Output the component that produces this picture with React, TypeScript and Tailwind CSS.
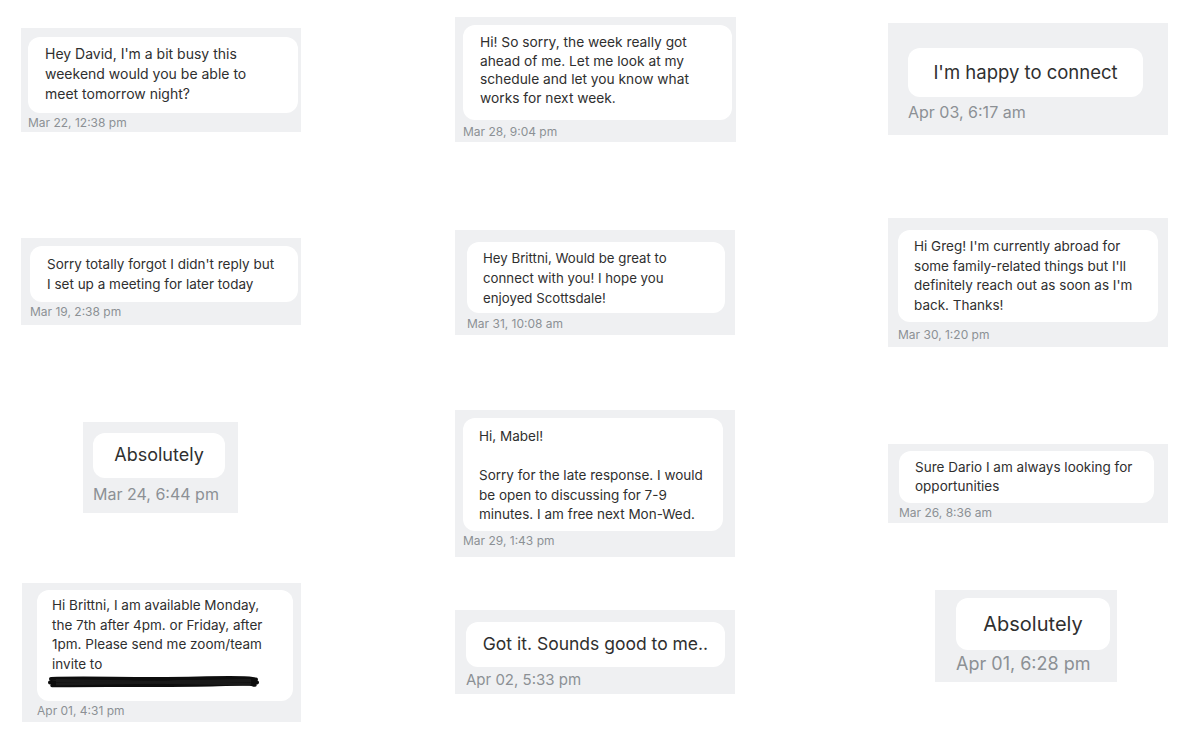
import React from "react";

type CardProps = {
  outer: string;
  bubble: string;
  ts: string;
  time: string;
  lines: React.ReactNode[];
  center?: boolean;
};

function Card({ outer, bubble, ts, time, lines, center }: CardProps) {
  return (
    <div className={"bg-[#eff0f2] flex flex-col shrink-0 " + outer}>
      <div className={"bg-white rounded-[12px] text-[#2f2f2f] " + (center ? "text-center " : "") + bubble}>
        {lines.map((l, i) => (
          <div key={i} className="whitespace-nowrap">
            {l}
          </div>
        ))}
      </div>
      <div className={"text-[#8c9095] whitespace-nowrap " + ts}>{time}</div>
    </div>
  );
}

function Redacted() {
  return (
    <svg width="212" height="14" viewBox="0 0 212 14" className="block -ml-[4px] mt-[1px]">
      <path d="M3 4 C40 2.5, 90 5, 150 3.5 S200 4, 208 4.5" stroke="#0d0d0d" strokeWidth="4" fill="none" strokeLinecap="round" />
      <path d="M2 7.5 C50 6, 100 8.5, 160 7 S200 6.5, 209 7.5" stroke="#0d0d0d" strokeWidth="4" fill="none" strokeLinecap="round" />
      <path d="M4 10.5 C60 9.5, 120 11, 170 9.5 S200 10.5, 207 10" stroke="#0d0d0d" strokeWidth="3.5" fill="none" strokeLinecap="round" />
      <path d="M8 5.5 L203 9" stroke="#1a1a1a" strokeWidth="3" fill="none" />
      <path d="M8 9 L203 5.5" stroke="#1a1a1a" strokeWidth="3" fill="none" />
    </svg>
  );
}

export default function App() {
  return (
    <div className="w-[1200px] h-[735px] bg-white flex font-['Inter',sans-serif] overflow-hidden">
      {/* Column 1 */}
      <div className="ml-[21px] w-[281px] flex flex-col">
        <Card
          outer="mt-[28px] w-[280px] h-[104px] pt-[9px] pl-[7px] pr-[3px]"
          bubble="pl-[17px] pt-[7px] pb-[9px] text-[14px] leading-[20px]"
          ts="mt-[2px] text-[12px] leading-[16px]"
          time="Mar 22, 12:38 pm"
          lines={["Hey David, I'm a bit busy this", "weekend would you be able to", "meet tomorrow night?"]}
        />
        <Card
          outer="mt-[106px] w-[280px] h-[87px] pt-[8px] pl-[9px] pr-[3px]"
          bubble="pl-[17px] pt-[8px] pb-[8px] text-[13.5px] leading-[20px]"
          ts="mt-[2px] text-[12px] leading-[16px]"
          time="Mar 19, 2:38 pm"
          lines={["Sorry totally forgot I didn't reply but", "I set up a meeting for later today"]}
        />
        <Card
          outer="mt-[97px] ml-[62px] w-[155px] h-[91px] pt-[11px] pl-[10px] pr-[13px]"
          bubble="h-[45px] pt-[10px] text-[18px] leading-[24px]"
          ts="mt-[6px] text-[16px] leading-[20px]"
          time="Mar 24, 6:44 pm"
          lines={["Absolutely"]}
          center
        />
        <Card
          outer="mt-[70px] ml-[1px] w-[279px] h-[139px] pt-[7px] pl-[15px] pr-[8px]"
          bubble="h-[111px] pl-[15px] pt-[6px] text-[13.5px] leading-[19.5px]"
          ts="mt-[2px] text-[12px] leading-[16px]"
          time="Apr 01, 4:31 pm"
          lines={[
            "Hi Brittni, I am available Monday,",
            "the 7th after 4pm. or Friday, after",
            "1pm. Please send me zoom/team",
            "invite to",
            <Redacted key="r" />,
          ]}
        />
      </div>

      {/* Column 2 */}
      <div className="ml-[153px] w-[281px] flex flex-col">
        <Card
          outer="mt-[17px] w-[281px] h-[125px] pt-[8px] pl-[8px] pr-[4px]"
          bubble="h-[95px] pl-[17px] pt-[8px] text-[13.75px] leading-[18.5px]"
          ts="mt-[4px] text-[12px] leading-[16px]"
          time="Mar 28, 9:04 pm"
          lines={["Hi! So sorry, the week really got", "ahead of me. Let me look at my", "schedule and let you know what", "works for next week."]}
        />
        <Card
          outer="mt-[88px] w-[280px] h-[105px] pt-[12px] pl-[12px] pr-[10px]"
          bubble="h-[71px] pl-[16px] pt-[6px] text-[13.25px] leading-[20px]"
          ts="mt-[3px] text-[12px] leading-[16px]"
          time="Mar 31, 10:08 am"
          lines={["Hey Brittni, Would be great to", "connect with you! I hope you", "enjoyed Scottsdale!"]}
        />
        <Card
          outer="mt-[75px] w-[280px] h-[147px] pt-[8px] pl-[8px] pr-[12px]"
          bubble="h-[113px] pl-[16px] pt-[9px] text-[13.5px] leading-[19.5px]"
          ts="mt-[2px] text-[12px] leading-[16px]"
          time="Mar 29, 1:43 pm"
          lines={["Hi, Mabel!", "\u00a0", "Sorry for the late response. I would", "be open to discussing for 7-9", "minutes. I am free next Mon-Wed."]}
        />
        <Card
          outer="mt-[53px] w-[280px] h-[84px] pt-[12px] pl-[11px] pr-[10px]"
          bubble="h-[45px] pt-[10px] text-[17.5px] leading-[24px]"
          ts="mt-[3px] text-[15px] leading-[20px]"
          time="Apr 02, 5:33 pm"
          lines={["Got it. Sounds good to me.."]}
          center
        />
      </div>

      {/* Column 3 */}
      <div className="ml-[152px] w-[280px] flex flex-col">
        <Card
          outer="mt-[23px] w-[280px] h-[112px] pt-[25px] pl-[20px] pr-[25px]"
          bubble="h-[49px] pt-[12px] text-[18.5px] leading-[24px]"
          ts="mt-[4px] text-[16px] leading-[22px]"
          time="Apr 03, 6:17 am"
          lines={["I'm happy to connect"]}
          center
        />
        <Card
          outer="mt-[83px] w-[280px] h-[129px] pt-[12px] pl-[10px] pr-[10px]"
          bubble="h-[92px] pl-[16px] pt-[7px] text-[13.5px] leading-[19.5px]"
          ts="mt-[5px] text-[12px] leading-[16px]"
          time="Mar 30, 1:20 pm"
          lines={["Hi Greg! I'm currently abroad for", "some family-related things but I'll", "definitely reach out as soon as I'm", "back. Thanks!"]}
        />
        <Card
          outer="mt-[97px] w-[280px] h-[79px] pt-[7px] pl-[11px] pr-[14px]"
          bubble="h-[52px] pl-[16px] pt-[6.5px] text-[13.5px] leading-[19px]"
          ts="mt-[2px] text-[12px] leading-[16px]"
          time="Mar 26, 8:36 am"
          lines={["Sure Dario I am always looking for", "opportunities"]}
        />
        <Card
          outer="mt-[67px] ml-[47px] w-[182px] h-[92px] pt-[8px] pl-[21px] pr-[7px]"
          bubble="h-[52px] pt-[12px] text-[20px] leading-[28px]"
          ts="mt-[2px] text-[18px] leading-[24px]"
          time="Apr 01, 6:28 pm"
          lines={["Absolutely"]}
          center
        />
      </div>
    </div>
  );
}
